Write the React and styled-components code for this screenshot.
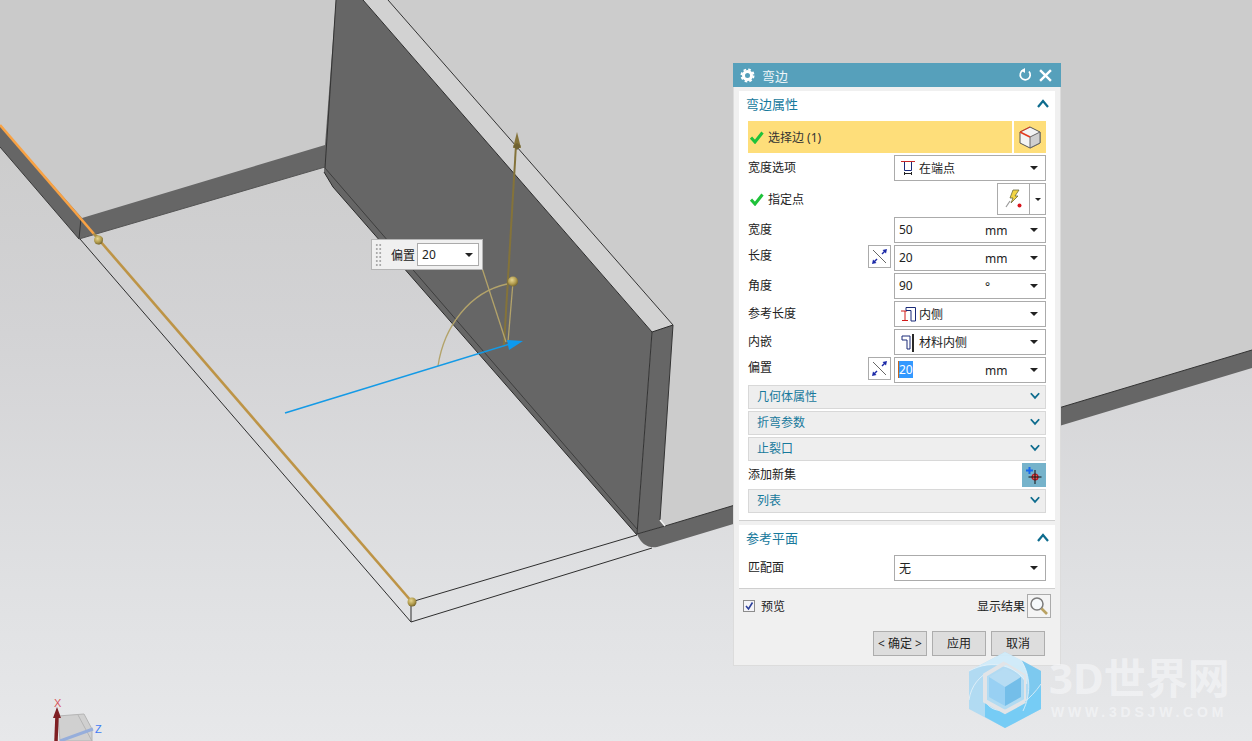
import React from "react";
import styled, { createGlobalStyle } from "styled-components";

const Global = createGlobalStyle`
  html, body { margin: 0; padding: 0; overflow: hidden; }
  body { font-family: "Noto Sans", "Noto Sans CJK SC", sans-serif; font-size: 12px; color: #222; }
`;

const FONT = `"Noto Sans", "Noto Sans CJK SC", sans-serif`;
const TEAL = "#17799c";

const Canvas = styled.div`
  position: relative;
  width: 1252px;
  height: 741px;
  overflow: hidden;
  background: linear-gradient(180deg, #c9c9c9 0%, #cccccc 18%, #d3d3d5 45%, #e0e1e3 80%, #e7e8ea 100%);
`;
const SceneSvg = styled.svg`
  position: absolute;
  inset: 0;
`;

/* Scene drawing */
function Scene() {
  return (
    <SceneSvg width="1252" height="741" viewBox="0 0 1252 741">
      <defs>
        <radialGradient id="ball" cx="40%" cy="35%" r="70%">
          <stop offset="0%" stopColor="#e6d590" />
          <stop offset="60%" stopColor="#b09a4c" />
          <stop offset="100%" stopColor="#6d5d28" />
        </radialGradient>
      </defs>
      {/* upper planes */}
      <polygon points="388,0 1252,0 1252,350 665,526 660,520 673,325" fill="#cccccc" />
      <polygon points="0,0 336,0 325,145 82,218 0,125" fill="#cacaca" />
      {/* left flange */}
      <polygon points="0,125 82,218 325,145 325,167 79,239 0,147" fill="#666666" />
      <line x1="0" y1="147" x2="79" y2="239" stroke="#3a3a3a" strokeWidth="1" />
      <line x1="81" y1="218" x2="79" y2="239" stroke="#333" strokeWidth="1" />
      <line x1="79" y1="239" x2="325" y2="167" stroke="#555" strokeWidth="1" />
      {/* wall */}
      <polygon points="336,0 363,0 652,332 637,535 333,187 324,172 325,145" fill="#666666" />
      <polygon points="363,0 388,0 673,325 652,332" fill="#d2d2d2" />
      <polygon points="652,332 673,325 660,520 665,526 637,534" fill="#666666" />
      <polyline points="363,0 652,332 673,325" fill="none" stroke="#2c2c2c" strokeWidth="1" />
      <line x1="388" y1="0" x2="673" y2="325" stroke="#333" strokeWidth="1" />
      <line x1="652" y1="332" x2="637" y2="534" stroke="#333" strokeWidth="1" />
      <line x1="673" y1="325" x2="660" y2="520" stroke="#333" strokeWidth="1" />
      <line x1="336" y1="0" x2="325" y2="168" stroke="#333" strokeWidth="1" />
      <polyline points="324,172 333,187 637,535" fill="none" stroke="#2a2a2a" strokeWidth="1" />
      <line x1="325" y1="168" x2="637" y2="529" stroke="#3e3e3e" strokeWidth="1" />
      {/* lower right band */}
      <path d="M637 534 L665 526 L1252 350 L1252 368 L657 547 Q643 549 637 534Z" fill="#666666" />
      <polyline points="637,534 665,526 1252,350" fill="none" stroke="#333" strokeWidth="1" />
      <line x1="660" y1="520" x2="665" y2="526" stroke="#f3f3f3" strokeWidth="1.500" />
      {/* wire frame */}
      <g stroke="#2e2e2e" strokeWidth="1" fill="none">
        <line x1="80" y1="239" x2="411" y2="622" />
        <line x1="411" y1="602" x2="411" y2="622" />
        <line x1="411" y1="602" x2="637" y2="535" />
        <line x1="411" y1="622" x2="652" y2="548" />
      </g>
      {/* edge selection */}
      <line x1="0" y1="125" x2="94" y2="234" stroke="#f8a244" strokeWidth="2.600" />
      <line x1="94" y1="234" x2="412" y2="602" stroke="#bd9446" strokeWidth="2.600" />
      <polygon points="93,233 103,238 99,245" fill="#a98f46" />
      <circle cx="98.500" cy="240" r="4.500" fill="url(#ball)" />
      <circle cx="412" cy="602" r="4.500" fill="url(#ball)" />
      {/* gizmo */}
      <line x1="504" y1="345" x2="516" y2="145" stroke="#84733a" strokeWidth="2" />
      <polygon points="517,132 513,148 521,148" fill="#84733a" />
      <polygon points="513,146 517,150 521,146 517,143" fill="#6f6232" />
      <path d="M438 366 C444 326 470 292 507 284" fill="none" stroke="#b3a36a" strokeWidth="1.300" />
      <line x1="513" y1="282" x2="508" y2="342" stroke="#b3a36a" strokeWidth="1.300" />
      <line x1="482" y1="268" x2="506" y2="342" stroke="#b3a36a" strokeWidth="1.300" />
      <circle cx="513" cy="281.500" r="5" fill="url(#ball)" />
      <line x1="285" y1="413" x2="510" y2="344" stroke="#149ae6" strokeWidth="1.600" />
      <polygon points="523,341 507,340 509,350" fill="#0d9af0" />
      {/* triad */}
      <polygon points="58,716 84,714 92,729 92,741 60,741" fill="#d0d0d0" stroke="#b5b5b5" strokeWidth="1" />
      <line x1="78" y1="715" x2="92" y2="741" stroke="#b5b5b5" />
      <line x1="60" y1="741" x2="93" y2="729" stroke="#96aedb" strokeWidth="3" />
      <line x1="56" y1="741" x2="57" y2="716" stroke="#7e1f23" strokeWidth="3.500" />
      <polygon points="57,707 53,718 61,718" fill="#7e1f23" />
      <text x="54" y="707" fontFamily="Liberation Sans, sans-serif" fontSize="11" fill="#d8575c">X</text>
      <text x="95" y="733" fontFamily="Liberation Sans, sans-serif" fontSize="11" fill="#3f7cf5">Z</text>
    </SceneSvg>
  );
}

/* Dialog */
const Dialog = styled.div`
  position: absolute;
  left: 733px;
  top: 63px;
  width: 328px;
  height: 603px;
  box-sizing: border-box;
  background: #f0f0f0;
  border: 1px solid #dcdcdc;
  border-top: none;
  display: flex;
  flex-direction: column;
  font-family: ${FONT};
`;
const TitleBar = styled.div`
  height: 24px;
  margin: 0 -1px;
  background: #56a0bb;
  color: #fff;
  display: flex;
  align-items: center;
  padding: 0 9px 0 7px;
  gap: 7px;
  font-size: 13px;
`;
const TitleText = styled.span`
  flex: 1;
  color: #eef6f9;
`;
const Panel = styled.div`
  margin: ${(p) => p.$mt}px 5px 0;
  background: #fff;
  border-bottom: 1px solid #cfcfcf;
  height: ${(p) => p.$h}px;
  padding: 0 9px 0 9px;
  box-sizing: border-box;
  display: flex;
  flex-direction: column;
`;
const PanelHeader = styled.div`
  height: 28px;
  margin: 0 -3px 2px -3px;
  padding: 0 0 4px 1px;
  box-sizing: border-box;
  display: flex;
  align-items: center;
  justify-content: space-between;
  color: ${TEAL};
  font-size: 13px;
`;
const Rows = styled.div`
  display: flex;
  flex-direction: column;
  gap: 2px;
`;
const Row = styled.div`
  height: ${(p) => p.$h || 26}px;
  display: flex;
  align-items: center;
  gap: 2px;
`;
const Label = styled.span`
  flex: 1;
  padding-bottom: ${(p) => (p.$raised ? 7 : 2)}px;
  font-size: 12px;
  color: #222;
`;
const SelectRow = styled.div`
  flex: 1;
  height: 32px;
  background: #fede7a;
  display: flex;
  align-items: center;
  gap: 4px;
  padding-left: 2px;
  color: #333;
`;
const SelectIconBox = styled.div`
  width: 32px;
  height: 32px;
  background: #fede7a;
  display: flex;
  align-items: center;
  justify-content: center;
`;
const CheckLabel = styled.div`
  flex: 1;
  display: flex;
  align-items: center;
  gap: 4px;
  padding-left: 2px;
`;
const Combo = styled.div`
  width: 152px;
  height: 26px;
  flex: none;
  box-sizing: border-box;
  border: 1px solid #ababab;
  background: #fff;
  display: flex;
  align-items: center;
  padding: 0 7px 0 4px;
  font-size: 12px;
  color: #222;
`;
const ComboIcon = styled.span`
  width: 16px;
  height: 16px;
  margin: 0 2px 0 2px;
  display: flex;
`;
const ComboText = styled.span`
  flex: 1;
  padding-bottom: ${(p) => (p.$num ? 2 : 0)}px;
`;
const Unit = styled.span`
  width: 45px;
  font-size: 12px;
  color: #222;
`;
const Picked = styled.span`
  background: #3399ff;
  color: #fff;
  border-left: 1px solid #c8661a;
  margin-left: -1px;
`;
const Caret = styled.span`
  width: 0;
  height: 0;
  border-left: 4px solid transparent;
  border-right: 4px solid transparent;
  border-top: 4px solid #222;
`;
const FormulaBtn = styled.div`
  width: 23px;
  height: 23px;
  box-sizing: border-box;
  border: 1px solid #ababab;
  background: #fff;
  margin-right: 1px;
  margin-bottom: 3px;
  display: flex;
  align-items: center;
  justify-content: center;
`;
const PointBtn = styled.div`
  height: 32px;
  width: 49px;
  box-sizing: border-box;
  border: 1px solid #ababab;
  background: #fff;
  display: flex;
`;
const PointMain = styled.div`
  width: 31px;
  display: flex;
  align-items: center;
  justify-content: center;
  border-right: 1px solid #ababab;
`;
const PointArrow = styled.div`
  flex: 1;
  display: flex;
  align-items: center;
  justify-content: center;
`;
const SmallCaret = styled(Caret)`
  border-left-width: 3px;
  border-right-width: 3px;
  border-top-width: 3px;
`;
const Group = styled.div`
  height: 24px;
  box-sizing: border-box;
  border: 1px solid #d8d8d8;
  background: #eeeeee;
  color: ${TEAL};
  display: flex;
  align-items: center;
  justify-content: space-between;
  padding: 0 5px 2px 8px;
`;
const AddBtn = styled.div`
  width: 24px;
  height: 24px;
  background: #76b3cb;
  display: flex;
  align-items: center;
  justify-content: center;
`;
const Footer = styled.div`
  display: flex;
  align-items: center;
  justify-content: space-between;
  margin-top: 4px;
  height: 26px;
  padding: 0 9px 0 9px;
`;
const CheckWrap = styled.div`
  display: flex;
  align-items: center;
  gap: 6px;
`;
const CheckBox = styled.span`
  width: 12px;
  height: 12px;
  box-sizing: border-box;
  border: 1px solid #8c8c8c;
  background: #f4f4f8;
  display: flex;
  align-items: center;
  justify-content: center;
`;
const ResultWrap = styled.div`
  display: flex;
  align-items: center;
  gap: 2px;
`;
const LensBtn = styled.div`
  width: 24px;
  height: 24px;
  box-sizing: border-box;
  border: 1px solid #ababab;
  background: #f4f4f4;
  display: flex;
  align-items: center;
  justify-content: center;
`;
const Actions = styled.div`
  display: flex;
  justify-content: flex-end;
  gap: 5px;
  margin-top: 12px;
  padding-right: 15px;
`;
const ActionBtn = styled.button`
  width: ${(p) => p.$w || 54}px;
  height: 25px;
  box-sizing: border-box;
  border: 1px solid #adadad;
  background: #dddddd;
  color: #222;
  font: 12px ${FONT};
  padding: 0 0 2px;
`;

/* Floating callout */
const Callout = styled.div`
  position: absolute;
  left: 371px;
  top: 239px;
  width: 112px;
  height: 31px;
  box-sizing: border-box;
  border: 1px solid #b5b5b5;
  background: #f0f0f0;
  display: flex;
  align-items: center;
  padding: 0 3px 0 3px;
  font-family: ${FONT};
`;
const Grip = styled.span`
  width: 7px;
  height: 24px;
  background-image: radial-gradient(circle, #aaa 1px, transparent 1.2px);
  background-size: 3.500px 4px;
  margin-right: 9px;
`;
const CalloutLabel = styled.span`
  margin-right: 2px;
  white-space: nowrap;
`;
const CalloutCombo = styled.div`
  width: 62px;
  height: 23px;
  box-sizing: border-box;
  border: 1px solid #ababab;
  background: #fff;
  display: flex;
  align-items: center;
  justify-content: space-between;
  padding: 0 5px 0 4px;
`;

/* Watermark */
const Watermark = styled.div`
  position: absolute;
  left: 969px;
  top: 650px;
  width: 262px;
  height: 80px;
  pointer-events: none;
`;
const LogoSvg = styled.svg`
  position: absolute;
  left: 0;
  top: 0;
`;
const MarkTitle = styled.div`
  position: absolute;
  left: 80px;
  top: 3px;
  font: 700 42px/50px "Noto Sans", "Noto Sans CJK SC", sans-serif;
  color: rgba(246, 247, 249, 0.62);
  white-space: nowrap;
`;
const MarkSub = styled.div`
  position: absolute;
  left: 82px;
  top: 54px;
  font: 700 14px/16px "Liberation Sans", sans-serif;
  letter-spacing: 3.800px;
  color: rgba(246, 247, 249, 0.62);
  white-space: nowrap;
`;

/* Icons */
const Chevron = ({ up, size = 10 }) => (
  <svg width={size} height={size * 0.75} viewBox="0 0 12 9">
    <polyline points={up ? "1,8 6,2 11,8" : "1,1.500 6,7 11,1.500"} fill="none" stroke="#0e6c8e" strokeWidth="2.200" />
  </svg>
);
const Gear = () => (
  <svg width="15" height="15" viewBox="0 0 15 15">
    <circle cx="7.500" cy="7.500" r="4" fill="none" stroke="#fff" strokeWidth="3" />
    <circle cx="7.500" cy="7.500" r="6" fill="none" stroke="#fff" strokeWidth="2" strokeDasharray="2.600 2.112" />
  </svg>
);
const Reset = () => (
  <svg width="14" height="14" viewBox="0 0 14 14">
    <path d="M5 2.300 A5 5 0 1 0 11 3.500" fill="none" stroke="#fff" strokeWidth="1.700" />
    <polygon points="7,0 7,5 3,2.500" fill="#fff" />
  </svg>
);
const Close = () => (
  <svg width="13" height="13" viewBox="0 0 12 12">
    <path d="M1 1 L11 11 M11 1 L1 11" stroke="#fff" strokeWidth="2.200" />
  </svg>
);
const Tick = () => (
  <svg width="14" height="13" viewBox="0 0 14 13">
    <path d="M1 6.500 L5 11 L12.500 1.500" fill="none" stroke="#1fc23a" strokeWidth="3" />
  </svg>
);
const EdgeCube = () => (
  <svg width="24" height="24" viewBox="0 0 24 24">
    <polygon points="12,2 22,7 22,18 12,23 2,18 2,7" fill="#f3f3f3" stroke="#555" strokeWidth="1" />
    <polygon points="12,12 22,7 22,18 12,23" fill="#cfcfcf" stroke="#666" strokeWidth="1" />
    <polyline points="2,7 12,12" stroke="#e33b20" strokeWidth="1.600" fill="none" />
    <polyline points="2,7 12,2" stroke="#e33b20" strokeWidth="1" fill="none" />
  </svg>
);
const WidthIcon = () => (
  <svg width="16" height="16" viewBox="0 0 16 16">
    <line x1="0" y1="1.500" x2="14" y2="1.500" stroke="#c8282a" />
    <polyline points="3.500,2 3.500,10.500 10.500,10.500 10.500,2" fill="none" stroke="#1a2a78" />
    <path d="M3.500 12 V15 M10.500 12 V15 M3.500 13.500 H10.500" stroke="#222" />
  </svg>
);
const PointIcon = () => (
  <svg width="20" height="20" viewBox="0 0 20 20">
    <polygon points="9,1 15,1 11,7 14,7 7,14 9,9 6,9" fill="#f2d544" stroke="#6b6b40" strokeWidth="0.800" />
    <line x1="6" y1="12" x2="2" y2="18" stroke="#9a9a9a" strokeWidth="1.200" />
    <circle cx="15.500" cy="16.500" r="2" fill="#d9141c" />
  </svg>
);
const FormulaIcon = () => (
  <svg width="17" height="17" viewBox="0 0 17 17">
    <line x1="2" y1="2" x2="15" y2="15" stroke="#666" strokeWidth="1" />
    <line x1="11" y1="6" x2="14" y2="3" stroke="#1c2aa8" strokeWidth="1.500" />
    <line x1="3" y1="14" x2="6" y2="11" stroke="#1c2aa8" strokeWidth="1.500" />
    <polygon points="16,1 11.500,2 15,5.500" fill="#1c2aa8" />
    <polygon points="1,16 5.500,15 2,11.500" fill="#1c2aa8" />
  </svg>
);
const InnerIcon = () => (
  <svg width="16" height="17" viewBox="0 0 16 17">
    <line x1="0" y1="5" x2="6" y2="5" stroke="#d11a1a" />
    <path d="M1 14.500 H7 M4 5 V14" stroke="#d11a1a" />
    <path d="M5 1.500 H14.500 V15 H10 V4.500 H5Z" fill="none" stroke="#1a2a78" strokeWidth="1" />
  </svg>
);
const InlayIcon = () => (
  <svg width="16" height="18" viewBox="0 0 16 18">
    <path d="M1 2 H9 V15 H6 V6 H1Z" fill="none" stroke="#1a2a78" strokeWidth="1" />
    <line x1="12" y1="0" x2="12" y2="18" stroke="#111" strokeWidth="1.800" />
  </svg>
);
const AddIcon = () => (
  <svg width="16" height="17" viewBox="0 0 16 17">
    <path d="M3.500 0 V7 M0 3.500 H7" stroke="#1668ee" strokeWidth="2" />
    <circle cx="9" cy="10" r="3" fill="#e06060" stroke="#c0141c" strokeWidth="1.200" />
    <path d="M9 3 V17 M2.500 10 H15.500" stroke="#111" strokeWidth="1" />
  </svg>
);
const Lens = () => (
  <svg width="20" height="20" viewBox="0 0 20 20">
    <circle cx="8" cy="8" r="6" fill="#f6f9fb" stroke="#7b7b7b" strokeWidth="1.500" />
    <line x1="12.500" y1="12.500" x2="18" y2="18" stroke="#b9a262" strokeWidth="2.600" />
  </svg>
);
const CheckMark = () => (
  <svg width="10" height="10" viewBox="0 0 10 10">
    <path d="M2 5 L4.500 8 L8.500 1.500" fill="none" stroke="#2b3f9a" strokeWidth="1.600" />
  </svg>
);
const Logo = () => (
  <LogoSvg width="72" height="80" viewBox="0 0 72 80">
    <polygon points="36,2 72,21 72,59 36,78 0,59 0,21" fill="#a8d8f3" opacity="0.85" />
    <path d="M0 21 L36 2 L52 10 C58 18 60 26 58 34 C48 16 24 8 0 21Z" fill="#d6edf9" opacity="0.85" />
    <path d="M52 10 L72 21 L72 46 C68 54 62 58 54 61 C62 44 62 26 52 10Z" fill="#78c6ee" opacity="0.9" />
    <path d="M16 50 C22 66 50 66 72 34 L72 59 L36 78 L16 67Z" fill="#76ccf5" />
    <path d="M0 50 C2 36 10 26 24 19 M16 50 C22 66 50 66 72 34 M52 10 C62 26 62 44 54 61 M0 21 C24 8 48 16 58 34" fill="none" stroke="#e8f3f9" strokeWidth="0.800" />
    <polyline points="36,13 16,25 16,51 36,62 56,51" fill="none" stroke="#e2e4e7" strokeWidth="4" />
    <polyline points="56,51 56,25 36,13" fill="none" stroke="#e2e4e7" strokeWidth="2" />
    <polygon points="36,18 52,27 36,37 20,27" fill="#b6dcf3" />
    <polygon points="20,27 36,37 36,56 20,47" fill="#98d0f3" />
    <polygon points="52,27 36,37 36,56 52,47" fill="#74bee9" />
  </LogoSvg>
);

const ComboRow = ({ label, raised, btn, icon, value, unit, picked }) => (
  <Row>
    <Label $raised={raised}>{label}</Label>
    {btn && (
      <FormulaBtn>
        <FormulaIcon />
      </FormulaBtn>
    )}
    <Combo>
      {icon && <ComboIcon>{icon}</ComboIcon>}
      <ComboText $num={!!unit}>{picked ? <Picked>{value}</Picked> : value}</ComboText>
      {unit && <Unit>{unit}</Unit>}
      <Caret />
    </Combo>
  </Row>
);

export default function App() {
  return (
    <Canvas>
      <Global />
      <Scene />
      <Callout>
        <Grip />
        <CalloutLabel>偏置</CalloutLabel>
        <CalloutCombo>
          <span>20</span>
          <Caret />
        </CalloutCombo>
      </Callout>
      <Dialog>
        <TitleBar>
          <Gear />
          <TitleText>弯边</TitleText>
          <Reset />
          <Close />
        </TitleBar>
        <Panel $mt={4} $h={430}>
          <PanelHeader>
            <span>弯边属性</span>
            <Chevron up size={12} />
          </PanelHeader>
          <Rows>
            <Row $h={32}>
              <SelectRow>
                <Tick />
                <span>选择边 (1)</span>
              </SelectRow>
              <SelectIconBox>
                <EdgeCube />
              </SelectIconBox>
            </Row>
            <ComboRow label="宽度选项" icon={<WidthIcon />} value="在端点" />
            <Row $h={32}>
              <CheckLabel>
                <Tick />
                <span>指定点</span>
              </CheckLabel>
              <PointBtn>
                <PointMain>
                  <PointIcon />
                </PointMain>
                <PointArrow>
                  <SmallCaret />
                </PointArrow>
              </PointBtn>
            </Row>
            <ComboRow label="宽度" value="50" unit="mm" />
            <ComboRow label="长度" raised btn value="20" unit="mm" />
            <ComboRow label="角度" value="90" unit="°" />
            <ComboRow label="参考长度" icon={<InnerIcon />} value="内侧" />
            <ComboRow label="内嵌" icon={<InlayIcon />} value="材料内侧" />
            <ComboRow label="偏置" raised btn value="20" unit="mm" picked />
            <Group>
              <span>几何体属性</span>
              <Chevron />
            </Group>
            <Group>
              <span>折弯参数</span>
              <Chevron />
            </Group>
            <Group>
              <span>止裂口</span>
              <Chevron />
            </Group>
            <Row $h={24}>
              <Label>添加新集</Label>
              <AddBtn>
                <AddIcon />
              </AddBtn>
            </Row>
            <Group>
              <span>列表</span>
              <Chevron />
            </Group>
          </Rows>
        </Panel>
        <Panel $mt={4} $h={64}>
          <PanelHeader>
            <span>参考平面</span>
            <Chevron up size={12} />
          </PanelHeader>
          <ComboRow label="匹配面" value="无" />
        </Panel>
        <Footer>
          <CheckWrap>
            <CheckBox>
              <CheckMark />
            </CheckBox>
            <span>预览</span>
          </CheckWrap>
          <ResultWrap>
            <span>显示结果</span>
            <LensBtn>
              <Lens />
            </LensBtn>
          </ResultWrap>
        </Footer>
        <Actions>
          <ActionBtn>&lt; 确定 &gt;</ActionBtn>
          <ActionBtn>应用</ActionBtn>
          <ActionBtn>取消</ActionBtn>
        </Actions>
      </Dialog>
      <Watermark>
        <Logo />
        <MarkTitle>3D世界网</MarkTitle>
        <MarkSub>WWW.3DSJW.COM</MarkSub>
      </Watermark>
    </Canvas>
  );
}
